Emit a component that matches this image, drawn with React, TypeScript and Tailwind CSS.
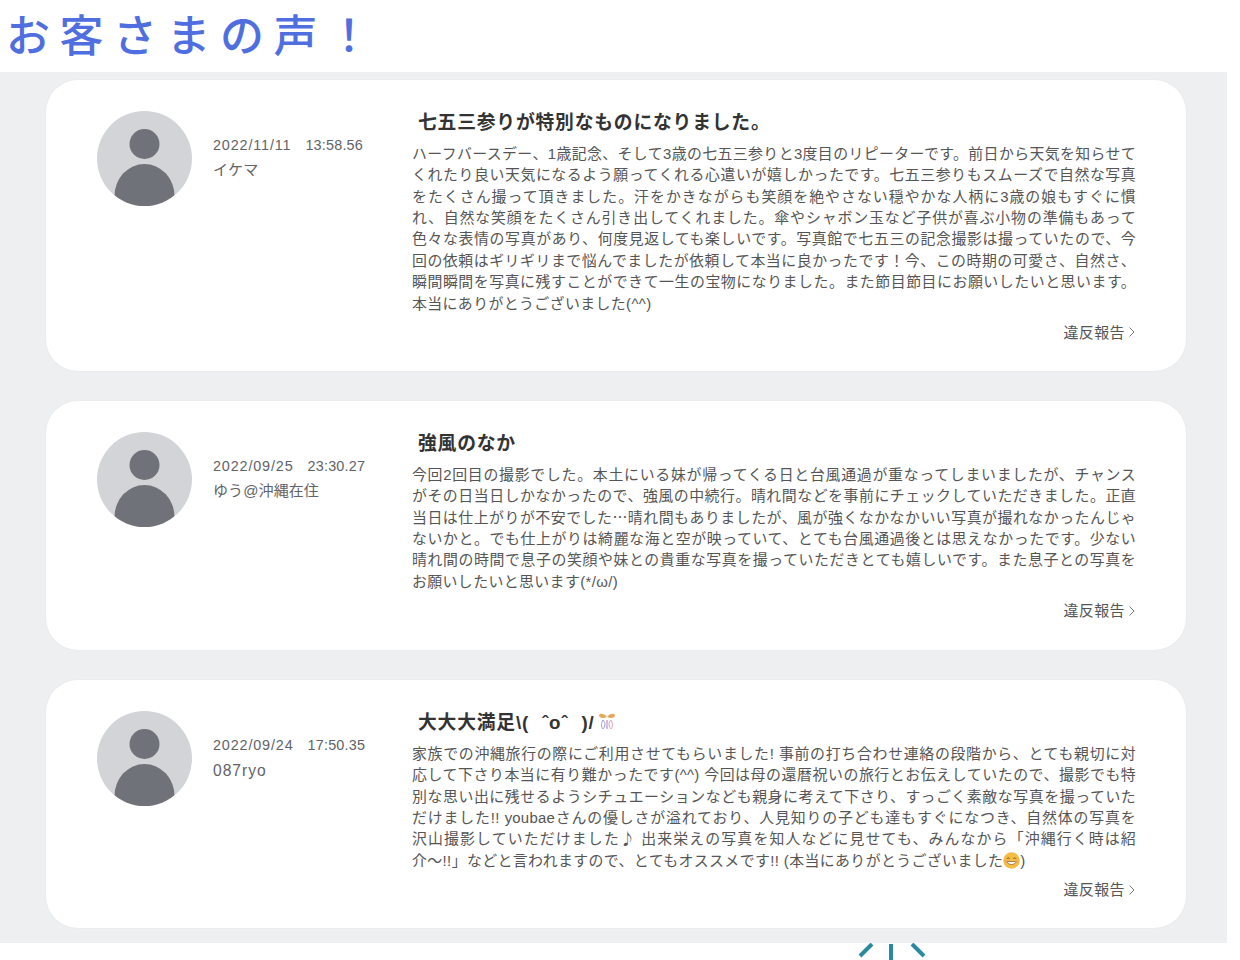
const FONT = "font-['Liberation_Sans','Noto_Sans_CJK_JP',sans-serif]";
const CJK = "font-['Noto_Sans_CJK_JP',sans-serif] leading-none";

function Avatar() {
  return (
    <svg width="95" height="95" viewBox="0 0 95 95" className="shrink-0">
      <defs>
        <clipPath id="avatar-clip">
          <circle cx="47.5" cy="47.5" r="47.5" />
        </clipPath>
      </defs>
      <circle cx="47.5" cy="47.5" r="47.5" fill="#d2d4d7" />
      <circle cx="47.5" cy="33" r="15" fill="#6f7379" />
      <g clipPath="url(#avatar-clip)">
        <ellipse cx="47.5" cy="85" rx="30" ry="32" fill="#6f7379" />
      </g>
    </svg>
  );
}

function Ribbon() {
  return (
    <svg width="20" height="20" viewBox="0 0 20 20" className="ml-[3px] inline-block align-[-3px]">
      <path d="M10 5C7 1 3 1 2 3c0 3 4 4 8 2zM10 5c3-4 7-4 8-2 0 3-4 4-8 2z" fill="#e8a75a" />
      <path d="M6 8c-2 3-2 7 0 9 2-2 3-6 0-9z" fill="none" stroke="#8fa8d8" strokeWidth="1" />
      <path d="M14 8c2 3 2 7 0 9-2-2-3-6 0-9z" fill="none" stroke="#e8a4bc" strokeWidth="1" />
      <path d="M10 8c-1 3-1 6 0 9 1-3 1-6 0-9z" fill="none" stroke="#d8a8d8" strokeWidth="1" />
    </svg>
  );
}

function Smile() {
  return (
    <svg width="17" height="17" viewBox="0 0 17 17" className="inline-block align-[-3px]">
      <circle cx="8.5" cy="8.5" r="8.3" fill="#f3bd45" />
      <path d="M4 6.6c.6-1 1.9-1 2.500 0M10.500 6.600c.6-1 1.900-1 2.500 0" fill="none" stroke="#6b4415" strokeWidth="1" />
      <path d="M4 9.5c1 4 8 4 9 0z" fill="#fff" stroke="#8b5a1c" strokeWidth=".7" />
      <circle cx="3.4" cy="9.6" r="1.3" fill="#ef9a6a" />
      <circle cx="13.6" cy="9.6" r="1.3" fill="#ef9a6a" />
    </svg>
  );
}

type Review = {
  date: string;
  time: string;
  name: string;
  nameClass: string;
  title: React.ReactNode;
  lines: React.ReactNode[];
  height: string;
};

const reviews: Review[] = [
  {
    date: "2022/11/11",
    time: "13:58.56",
    name: "イケマ",
    nameClass: "mt-[3px] text-[15px] tracking-[0.1px]",
    title: "七五三参りが特別なものになりました。",
    height: "h-[291px]",
    lines: [
      "ハーフバースデー、1歳記念、そして3歳の七五三参りと3度目のリピーターです。前日から天気を知らせて",
      "くれたり良い天気になるよう願ってくれる心遣いが嬉しかったです。七五三参りもスムーズで自然な写真",
      "をたくさん撮って頂きました。汗をかきながらも笑顔を絶やさない穏やかな人柄に3歳の娘もすぐに慣",
      "れ、自然な笑顔をたくさん引き出してくれました。傘やシャボン玉など子供が喜ぶ小物の準備もあって",
      "色々な表情の写真があり、何度見返しても楽しいです。写真館で七五三の記念撮影は撮っていたので、今",
      "回の依頼はギリギリまで悩んでましたが依頼して本当に良かったです！今、この時期の可愛さ、自然さ、",
      "瞬間瞬間を写真に残すことができて一生の宝物になりました。また節目節目にお願いしたいと思います。",
      "本当にありがとうございました(^^)",
    ],
  },
  {
    date: "2022/09/25",
    time: "23:30.27",
    name: "ゆう@沖縄在住",
    nameClass: "mt-[3px] text-[15px] tracking-[0.1px]",
    title: "強風のなか",
    height: "h-[249px]",
    lines: [
      "今回2回目の撮影でした。本土にいる妹が帰ってくる日と台風通過が重なってしまいましたが、チャンス",
      "がその日当日しかなかったので、強風の中続行。晴れ間などを事前にチェックしていただきました。正直",
      <>
        当日は仕上がりが不安でした<span className={CJK}>…</span>晴れ間もありましたが、風が強くなかなかいい写真が撮れなかったんじゃ
      </>,
      "ないかと。でも仕上がりは綺麗な海と空が映っていて、とても台風通過後とは思えなかったです。少ない",
      "晴れ間の時間で息子の笑顔や妹との貴重な写真を撮っていただきとても嬉しいです。また息子との写真を",
      "お願いしたいと思います(*/ω/)",
    ],
  },
  {
    date: "2022/09/24",
    time: "17:50.35",
    name: "087ryo",
    nameClass: "mt-[4px] text-[15.6px] tracking-[1px]",
    title: (
      <>
        大大大満足\( ˆoˆ )/
        <Ribbon />
      </>
    ),
    height: "h-[248px]",
    lines: [
      "家族での沖縄旅行の際にご利用させてもらいました! 事前の打ち合わせ連絡の段階から、とても親切に対",
      "応して下さり本当に有り難かったです(^^) 今回は母の還暦祝いの旅行とお伝えしていたので、撮影でも特",
      "別な思い出に残せるようシチュエーションなども親身に考えて下さり、すっごく素敵な写真を撮っていた",
      "だけました!! youbaeさんの優しさが溢れており、人見知りの子ども達もすぐになつき、自然体の写真を",
      <>
        沢山撮影していただけました<span className={CJK}>♪</span> 出来栄えの写真を知人などに見せても、みんなから「沖縄行く時は紹
      </>,
      "介〜!!」などと言われますので、とてもオススメです!! (本当にありがとうございました",
    ],
  },
];

function Card({ review, index }: { review: Review; index: number }) {
  return (
    <article
      className={`${review.height} flex w-[1140px] rounded-[32px] bg-white pl-[51px] pr-[49px] pt-[31px] shadow-[0_0_2px_rgba(0,0,0,0.06)]`}
    >
      <Avatar />
      <div className="ml-[21px] w-[199px] shrink-0 pt-[24px] text-[#5f6368]">
        <p className="flex gap-[14px] text-[14.4px] leading-[21px] whitespace-nowrap">
          <span className="tracking-[0.85px]">{review.date}</span>
          <span className="tracking-[0.2px]">{review.time}</span>
        </p>
        <p className={`${review.nameClass} leading-[21px] whitespace-nowrap`}>{review.name}</p>
      </div>
      <div className="w-[724px] shrink-0">
        <h2 className="pl-[6px] text-[18.8px] leading-[24px] font-bold tracking-[0.8px] [word-spacing:7px] whitespace-nowrap text-[#333333]">
          {review.title}
        </h2>
        <div className="mt-[9px] text-[14.9px] leading-[21.36px] tracking-[0.25px] text-[#555555]">
          {review.lines.map((line, i) =>
            i === review.lines.length - 1 ? (
              <p key={i} className="tracking-[0.4px] whitespace-nowrap">
                {line}
                {index === 2 ? (
                  <>
                    <Smile />)
                  </>
                ) : null}
              </p>
            ) : (
              <p key={i} className="text-justify [text-align-last:justify]">
                {line}
              </p>
            ),
          )}
        </div>
        <p className="mt-[7px] flex items-center justify-end gap-[3px] text-[15px] leading-[21px] tracking-[0.4px] text-[#555555]">
          違反報告
          <svg width="8" height="12" viewBox="0 0 8 12" fill="none" stroke="#777" strokeWidth="1">
            <path d="M1.500 1.500 6 6l-4.500 4.500" />
          </svg>
        </p>
      </div>
    </article>
  );
}

export default function App() {
  return (
    <div className={`${FONT} h-[960px] w-[1240px] overflow-hidden bg-white`}>
      <header className="flex h-[72px] items-center pl-[6px]">
        <h1 className="pb-[6px] font-['Noto_Sans_CJK_JP',sans-serif] text-[44px] leading-[56px] font-medium tracking-[9.5px] whitespace-nowrap text-[#4f6fe0]">
          お客さまの声！
        </h1>
      </header>
      <main className="flex h-[871px] w-[1227px] flex-col gap-[30px] bg-[#eeeff1] pl-[46px] pt-[8px]">
        {reviews.map((r, i) => (
          <Card key={i} review={r} index={i} />
        ))}
      </main>
      <div className="pl-[855px]">
        <svg width="75" height="17" viewBox="0 0 75 17" fill="none" stroke="#2b8a9e" strokeWidth="4">
          <path d="M5 13 17 1M36 1v16M57 1l12 12" />
        </svg>
      </div>
    </div>
  );
}
